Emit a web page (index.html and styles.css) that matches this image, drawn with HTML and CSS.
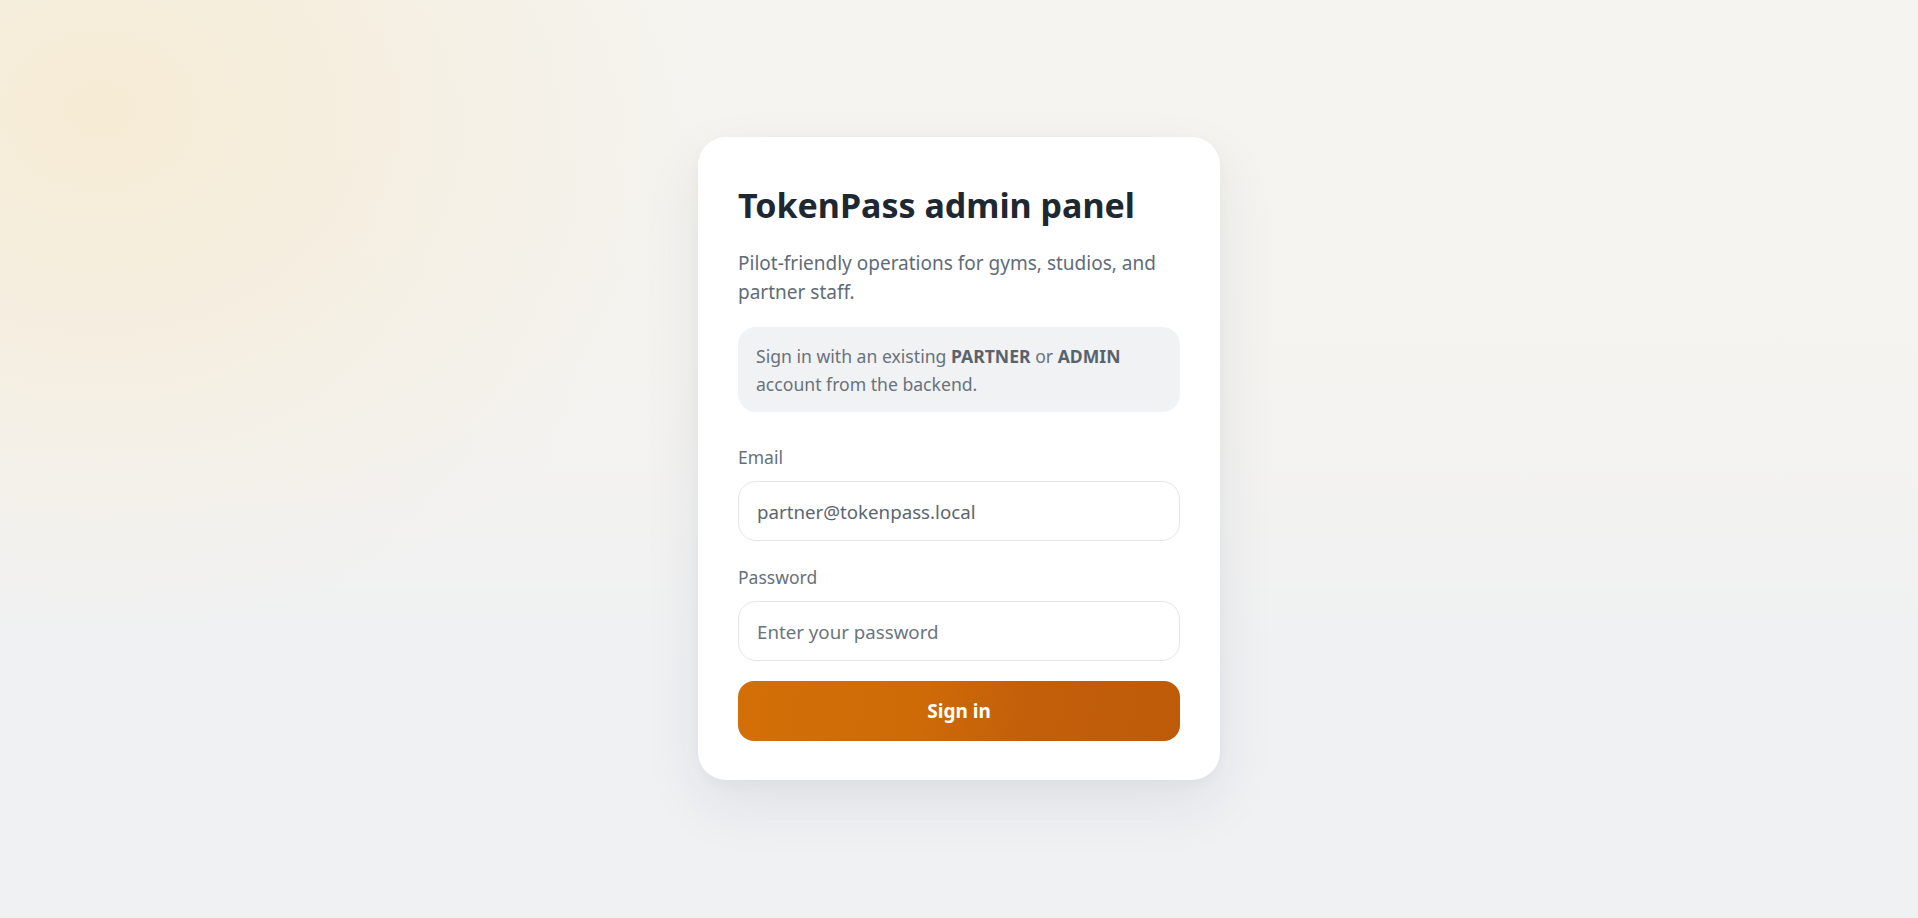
FILE: index.html
```html
<!DOCTYPE html>
<html lang="en">
<head>
<meta charset="utf-8">
<title>TokenPass admin panel</title>
<link rel="stylesheet" href="styles.css">
</head>
<body>
<main class="page">
  <section class="card">
    <h1 class="title">TokenPass admin panel</h1>
    <p class="subtitle">Pilot-friendly operations for gyms, studios, and partner staff.</p>
    <div class="notice">Sign in with an existing <strong>PARTNER</strong> or <strong>ADMIN</strong> account from the backend.</div>
    <form class="form">
      <div class="fields">
        <label class="field">
          <span class="label">Email</span>
          <input class="input" type="email" value="partner@tokenpass.local">
        </label>
        <label class="field">
          <span class="label">Password</span>
          <input class="input" type="password" placeholder="Enter your password">
        </label>
      </div>
      <button class="button" type="button">Sign in</button>
    </form>
  </section>
</main>
</body>
</html>
```
FILE: styles.css
```css
* { box-sizing: border-box; }
html, body { margin: 0; height: 100%; overflow: hidden; }
body {
  font-family: "Noto Sans", "Open Sans", sans-serif;
  color: #1f2933;
  background:
    radial-gradient(ellipse 620px 520px at 100px 110px, rgba(246, 233, 206, 0.8), rgba(246, 233, 206, 0) 100%),
    linear-gradient(180deg, #f5f4f0 0%, #f4f3f0 40%, #f0f1f3 75%, #f0f1f3 100%);
}
.page {
  height: 918px;
  display: flex;
  justify-content: center;
  padding-top: 137px;
}
.card {
  width: 522px;
  height: 643px;
  background: #ffffff;
  border-radius: 28px;
  padding: 48px 40px 39px;
  box-shadow: 0 24px 60px rgba(30, 41, 59, 0.08), 0 4px 14px rgba(30, 41, 59, 0.03);
}
.title {
  margin: 0;
  font-size: 34px;
  font-weight: 700;
  line-height: 41px;
  color: #1e2833;
}
.subtitle {
  margin: 23px 0 0;
  font-size: 19px;
  line-height: 29px;
  color: #616b77;
}
.notice {
  margin-top: 20px;
  background: #f1f2f3;
  border-radius: 18px;
  padding: 15px 18px 14px;
  font-size: 17.6px;
  line-height: 28px;
  color: #68717c;
}
.notice strong { color: #59636f; font-weight: 700; }
.form {
  margin-top: 33px;
  display: flex;
  flex-direction: column;
  gap: 20px;
}
.fields {
  display: flex;
  flex-direction: column;
  gap: 24px;
}
.field {
  display: flex;
  flex-direction: column;
  gap: 12px;
}
.label {
  font-size: 17.5px;
  line-height: 24px;
  color: #66707c;
}
.input {
  height: 60px;
  border: 1px solid #e4e6e9;
  border-radius: 18px;
  padding: 0 18px;
  font-family: inherit;
  font-size: 18.7px;
  color: #5b6571;
  background: #ffffff;
  outline: none;
}
.input::placeholder { color: #6b7480; }
.button {
  height: 60px;
  border: 0;
  border-radius: 16px;
  background: linear-gradient(100deg, #d36f06 0%, #cf6b07 40%, #c35f0a 65%, #be5b0a 100%);
  color: #ffffff;
  font-family: inherit;
  font-size: 19px;
  font-weight: 700;
}
```
